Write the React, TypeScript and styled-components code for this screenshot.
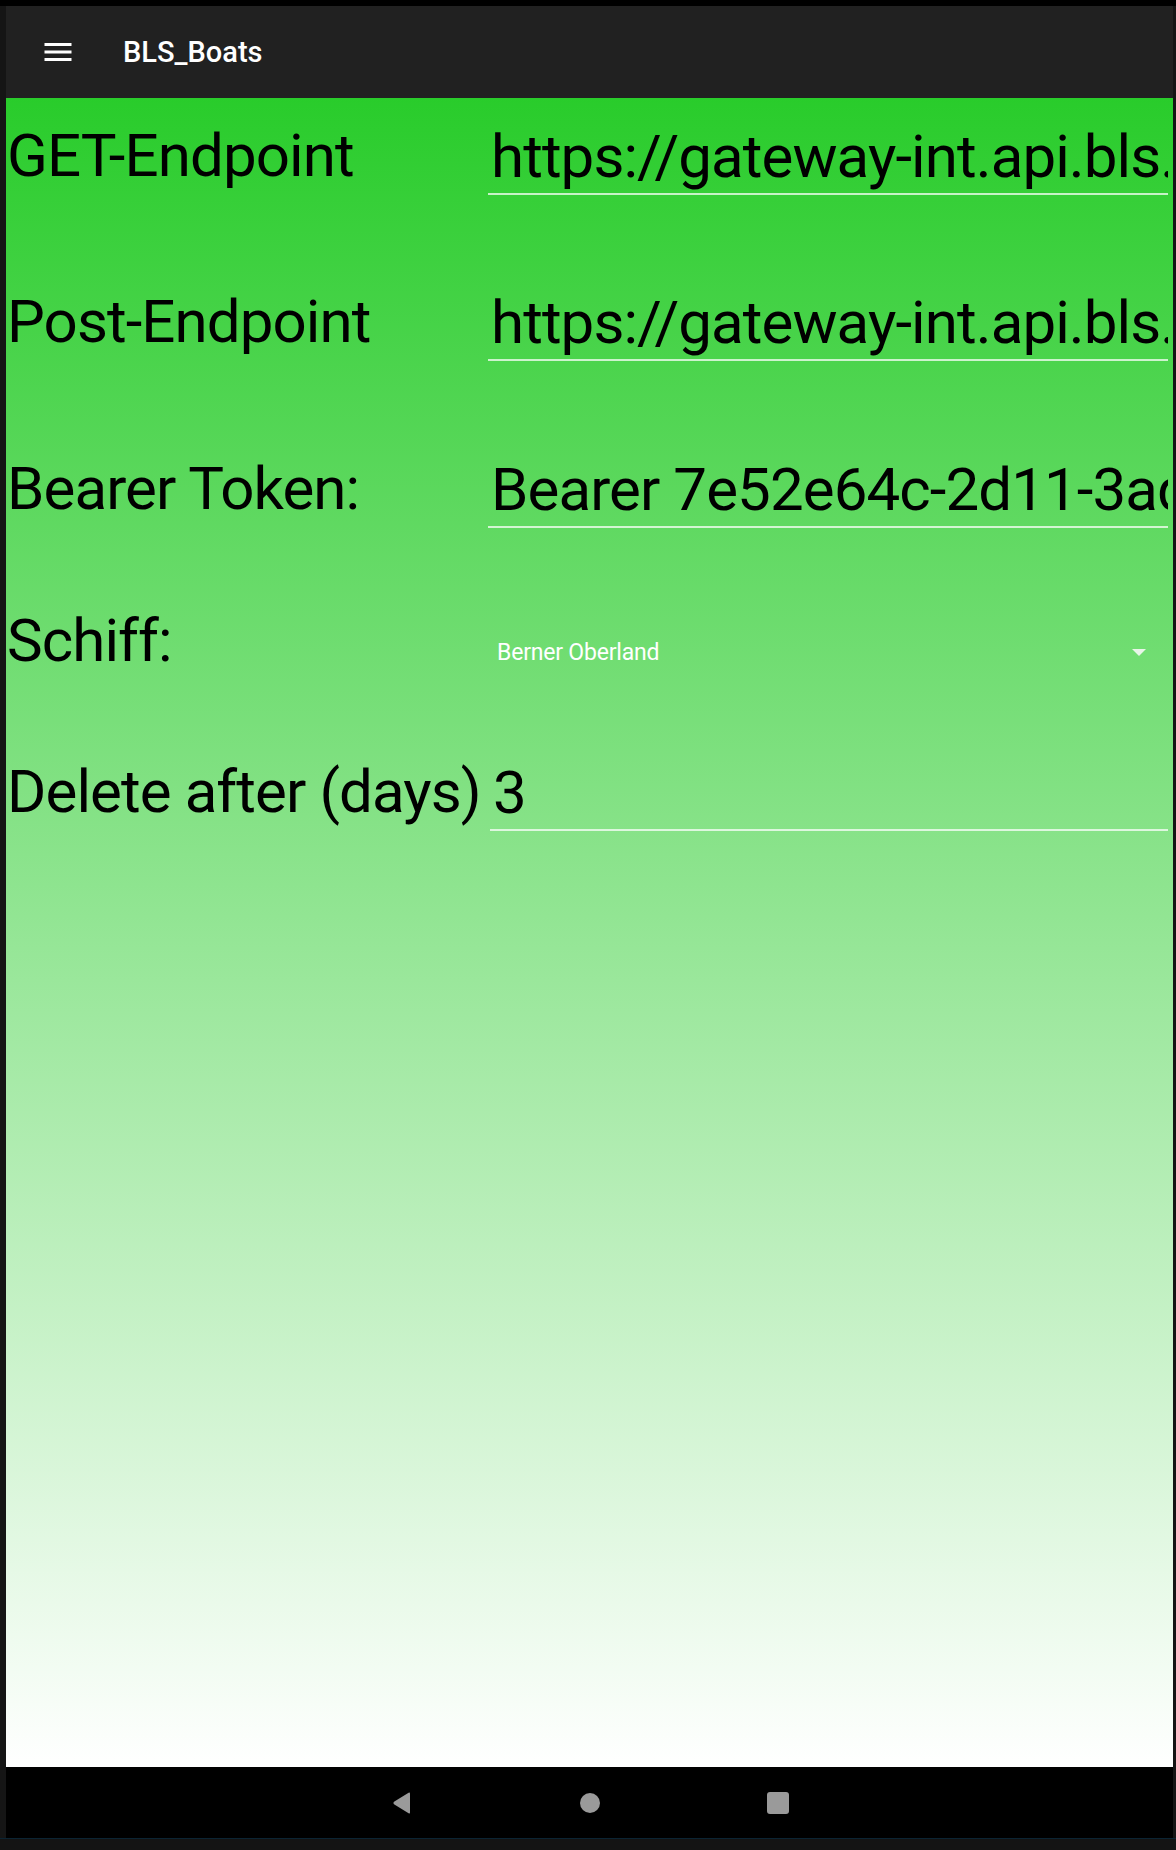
import React from "react";
import styled, { createGlobalStyle } from "styled-components";

const GlobalStyle = createGlobalStyle`
  html, body {
    margin: 0;
    padding: 0;
    background: #141414;
    font-family: Roboto, "Noto Sans", sans-serif;
  }
  #root {
    width: 1176px;
    height: 1850px;
  }
`;

const Screen = styled.div`
  width: 1176px;
  height: 1850px;
  display: flex;
  flex-direction: column;
  background: #141414;
`;

const TopStrip = styled.div`
  height: 6px;
  background: #000;
  flex: none;
`;

const Device = styled.div`
  flex: 1;
  display: flex;
  flex-direction: column;
  border-left: 6px solid #151515;
  border-right: 3px solid #151515;
  min-height: 0;
`;

const AppBar = styled.header`
  height: 92px;
  flex: none;
  background: #212121;
  display: flex;
  align-items: center;
  padding-left: 34px;
  gap: 47px;
  color: #fff;
`;

const MenuButton = styled.div`
  width: 36px;
  height: 36px;
  display: flex;
  align-items: center;
  justify-content: center;
`;

const Title = styled.h1`
  margin: 0;
  font-family: Roboto, sans-serif;
  font-weight: 500;
  font-size: 29px;
  letter-spacing: 0;
  color: #fff;
`;

const Content = styled.main`
  flex: 1;
  background: linear-gradient(to bottom, #29cc2b 0%, #ffffff 100%);
  padding-top: 23px;
  display: flex;
  flex-direction: column;
`;

const Row = styled.div<{ $gap: number }>`
  display: grid;
  grid-template-columns: 482px 1fr;
  align-items: start;
  margin-bottom: ${(p) => p.$gap}px;
  padding-right: 5px;
`;

const Label = styled.div`
  font-family: Roboto, sans-serif;
  font-size: 60px;
  line-height: 70px;
  color: #000;
  white-space: nowrap;
  padding-left: 1px;
  letter-spacing: -0.9px;
`;

const TextInput = styled.input<{ $inset?: number }>`
  display: block;
  width: calc(100% - ${(p) => p.$inset ?? 0}px);
  margin: 0 0 0 ${(p) => p.$inset ?? 0}px;
  box-sizing: border-box;
  min-width: 0;
  font-family: Roboto, sans-serif;
  font-size: 60px;
  line-height: 70px;
  height: 74px;
  color: #000;
  background: transparent;
  border: none;
  border-bottom: 2px solid rgba(255, 255, 255, 0.72);
  padding: 0 0 2px 3px;
  outline: none;
  letter-spacing: -0.9px;
`;

const Spinner = styled.div`
  display: flex;
  align-items: center;
  justify-content: space-between;
  height: 92px;
  padding: 0 22px 0 9px;
`;

const SpinnerText = styled.span`
  font-family: Roboto, sans-serif;
  font-size: 23px;
  color: #fff;
  letter-spacing: -0.2px;
`;

const NavBar = styled.nav`
  height: 71px;
  flex: none;
  background: #000;
  display: flex;
  align-items: center;
  justify-content: center;
  gap: 167px;
`;

const BottomStrip = styled.div`
  height: 11px;
  flex: none;
  background: #141414;
  border-top: 1px solid #0b2433;
`;

const NavCircle = styled.div`
  width: 20px;
  height: 20px;
  border-radius: 50%;
  background: #9a9a9a;
`;

const NavSquare = styled.div`
  width: 22px;
  height: 22px;
  border-radius: 3px;
  background: #9a9a9a;
`;

const MenuIcon = () => (
  <svg width="36" height="36" viewBox="0 0 24 24" fill="#fff">
    <path d="M3 18h18v-2H3v2zm0-5h18v-2H3v2zm0-7v2h18V6H3z" />
  </svg>
);

const BackIcon = () => (
  <svg width="22" height="24" viewBox="0 0 22 24">
    <path
      d="M19 2.5 L19 21.5 Q19 23 17.6 22.2 L3 13.2 Q1.6 12 3 10.8 L17.6 1.8 Q19 1 19 2.5 Z"
      fill="#9a9a9a"
    />
  </svg>
);

const DropArrow = () => (
  <svg width="14" height="7" viewBox="0 0 14 7">
    <path d="M0 0 L14 0 L7 7 Z" fill="#e8f5e8" />
  </svg>
);

export default function App() {
  return (
    <>
      <GlobalStyle />
      <Screen>
        <TopStrip />
        <Device>
          <AppBar>
            <MenuButton>
              <MenuIcon />
            </MenuButton>
            <Title>BLS_Boats</Title>
          </AppBar>
          <Content>
            <Row $gap={92}>
              <Label>GET-Endpoint</Label>
              <TextInput
                readOnly
                value="https://gateway-int.api.bls.ch/boats/v1/positions"
              />
            </Row>
            <Row $gap={93}>
              <Label>Post-Endpoint</Label>
              <TextInput
                readOnly
                value="https://gateway-int.api.bls.ch/boats/v1/passengers"
              />
            </Row>
            <Row $gap={78}>
              <Label>Bearer Token:</Label>
              <TextInput
                readOnly
                value="Bearer 7e52e64c-2d11-3ad4-9f1b-6c0e2a7d5b31"
              />
            </Row>
            <Row $gap={59}>
              <Label>Schiff:</Label>
              <Spinner>
                <SpinnerText>Berner Oberland</SpinnerText>
                <DropArrow />
              </Spinner>
            </Row>
            <Row $gap={0}>
              <Label>Delete after (days)</Label>
              <TextInput readOnly value="3" $inset={2} />
            </Row>
          </Content>
          <NavBar>
            <BackIcon />
            <NavCircle />
            <NavSquare />
          </NavBar>
        </Device>
        <BottomStrip />
      </Screen>
    </>
  );
}
